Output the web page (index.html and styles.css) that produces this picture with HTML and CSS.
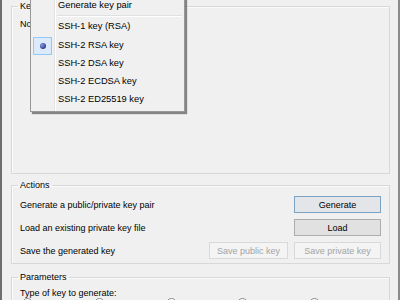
FILE: index.html
```html
<!DOCTYPE html>
<html>
<head>
<meta charset="utf-8">
<link rel="stylesheet" href="styles.css">
</head>
<body>
<div class="window">
  <fieldset class="group group-key">
    <legend>Key</legend>
    <p class="text">No key.</p>
  </fieldset>
  <fieldset class="group group-actions">
    <legend>Actions</legend>
    <div class="row">
      <span class="label">Generate a public/private key pair</span>
      <button class="btn btn-default">Generate</button>
    </div>
    <div class="row">
      <span class="label">Load an existing private key file</span>
      <button class="btn">Load</button>
    </div>
    <div class="row">
      <span class="label">Save the generated key</span>
      <button class="btn btn-small" disabled>Save public key</button>
      <button class="btn" disabled>Save private key</button>
    </div>
  </fieldset>
  <fieldset class="group group-params">
    <legend>Parameters</legend>
    <p class="text">Type of key to generate:</p>
    <div class="radios">
      <span class="radio"><span class="circle"></span><span class="rlabel">RSA</span></span>
      <span class="radio"><span class="circle"></span><span class="rlabel">DSA</span></span>
      <span class="radio"><span class="circle"></span><span class="rlabel">ECDSA</span></span>
      <span class="radio"><span class="circle"></span><span class="rlabel">ED25519</span></span>
      <span class="radio"><span class="circle"></span><span class="rlabel">SSH-1 (RSA)</span></span>
    </div>
  </fieldset>
  <div class="menu">
    <div class="item">Generate key pair</div>
    <div class="sep"></div>
    <div class="item">SSH-1 key (RSA)</div>
    <div class="item checked"><span class="check"><span class="dot"></span></span>SSH-2 RSA key</div>
    <div class="item">SSH-2 DSA key</div>
    <div class="item">SSH-2 ECDSA key</div>
    <div class="item">SSH-2 ED25519 key</div>
  </div>
</div>
</body>
</html>
```

FILE: styles.css
```css
html, body {
  margin: 0;
  padding: 0;
}
body {
  width: 400px;
  height: 300px;
  overflow: hidden;
  background: #f0f0f0;
  font-family: "Liberation Sans", Arial, sans-serif;
  font-size: 9px;
  color: #000;
}
.window {
  position: relative;
  box-sizing: border-box;
  width: 400px;
  height: 300px;
  overflow: hidden;
  border-left: 2px solid #6f6f6f;
  border-right: 2px solid #8a8a8a;
  padding: 0 8px 0 9px;
  background: #f0f0f0;
}
.group {
  box-sizing: border-box;
  margin: 0;
  padding: 0 8px 0 8px;
  border: 1px solid #d8d8d8;
  box-shadow: inset 1px 1px 0 #fbfbfb;
  min-width: 0;
}
.group legend {
  padding: 0 2px;
  margin-left: -2px;
  line-height: 14px;
  height: 14px;
}
.group-key {
  margin-top: -1px;
  height: 175px;
  padding-top: 4px;
}
.group-actions {
  margin-top: 4px;
  height: 86px;
  padding-top: 4px;
}
.group-params {
  margin-top: 6px;
  height: 60px;
  padding-top: 2px;
}
.text {
  margin: 0;
  line-height: 14px;
}
.row {
  display: flex;
  align-items: center;
  gap: 6px;
  height: 17px;
  margin-bottom: 6px;
}
.label {
  flex: 1;
}
.btn {
  box-sizing: border-box;
  width: 87px;
  height: 17px;
  padding: 0;
  margin: 0;
  font-family: inherit;
  font-size: 9px;
  color: #000;
  background: #e1e1e1;
  border: 1px solid #adadad;
  border-radius: 0;
}
.btn-default {
  border-color: #7ba3c6;
  background: #e3e5e8;
}
.btn-small {
  width: 79px;
}
.btn:disabled {
  color: #a3a3a3;
  background: #f4f4f4;
  border-color: #d9d9d9;
}
.radios {
  display: flex;
  margin-top: -2px;
  padding-left: 2px;
}
.radio {
  display: flex;
  align-items: flex-start;
  gap: 4px;
  width: 73px;
}
.rlabel {
  padding-top: 3px;
  line-height: 11px;
}
.circle {
  box-sizing: border-box;
  width: 11px;
  height: 11px;
  border: 1px solid #8a8a8a;
  border-radius: 50%;
  background: #fff;
}
.menu {
  position: absolute;
  left: 28px;
  top: -7px;
  box-sizing: border-box;
  width: 155px;
  padding: 2px 2px 2px 2px;
  font-size: 9.3px;
  background: #f0f0f0;
  border: 1px solid #979797;
  box-shadow: 2px 2px 1px rgba(0, 0, 0, 0.45);
  background-image: linear-gradient(to right, transparent 23px, #e2e3e3 23px, #e2e3e3 24px, #ffffff 24px, #ffffff 25px, transparent 25px);
}
.item {
  display: flex;
  align-items: center;
  height: 18.25px;
  padding-left: 25px;
  white-space: nowrap;
  position: relative;
}
.sep {
  height: 1px;
  margin: 1px 0 0 24px;
  background: #e0e0e0;
  border-bottom: 1px solid #ffffff;
}
.check {
  position: absolute;
  left: 0;
  top: 1px;
  box-sizing: border-box;
  width: 19px;
  height: 18px;
  border: 1px solid #90c8f6;
  background: #dcebfb;
  display: flex;
  align-items: center;
  justify-content: center;
}
.dot {
  width: 6px;
  height: 6px;
  border-radius: 50%;
  background: radial-gradient(circle at 35% 35%, #8a9be0, #2c3d96 70%);
}
```
